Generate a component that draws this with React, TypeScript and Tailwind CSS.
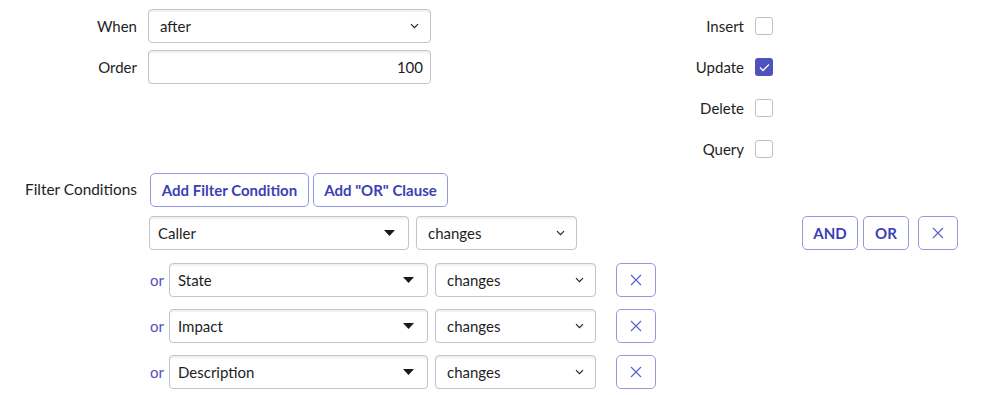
import React from "react";

const font = { fontFamily: "Lato, 'Open Sans', sans-serif" };

function Chevron() {
  return (
    <svg width="9" height="6" viewBox="0 0 9 6" className="shrink-0">
      <path d="M1 1.2l3.5 3.5 3.5-3.5" fill="none" stroke="#222" strokeWidth="1.2" />
    </svg>
  );
}

function Caret() {
  return (
    <svg width="11" height="6" viewBox="0 0 11 6" className="shrink-0">
      <path d="M0 0h11L5.5 6z" fill="#1a1a1a" />
    </svg>
  );
}

function XIcon() {
  return (
    <svg width="12" height="12" viewBox="0 0 12 12">
      <path d="M1 1l10 10M11 1L1 11" stroke="#5a5fc8" strokeWidth="1.1" fill="none" />
    </svg>
  );
}

function NativeSelect({ value, w }: { value: string; w: string }) {
  return (
    <div
      className={`${w} h-[34px] flex items-center justify-between pl-[11px] pr-[11px] border border-[#c3c3cb] rounded-[4px] shadow-[inset_0_2px_1px_rgba(0,0,0,0.06)] text-[15px] text-[#1e1e1e] bg-white`}
    >
      <span>{value}</span>
      <Chevron />
    </div>
  );
}

function RefSelect({ value, w }: { value: string; w: string }) {
  return (
    <div
      className={`${w} h-[34px] flex items-center justify-between pl-[8px] pr-[13px] border border-[#c3c3cb] rounded-[4px] shadow-[inset_0_2px_1px_rgba(0,0,0,0.06)] text-[15px] text-[#1e1e1e] bg-white`}
    >
      <span>{value}</span>
      <Caret />
    </div>
  );
}

function Btn({ children, w }: { children: React.ReactNode; w: string }) {
  return (
    <div
      className={`${w} h-[34px] flex items-center justify-center border border-[#9597de] rounded-[5px] text-[15px] font-bold text-[#3b40b5] bg-white`}
    >
      {children}
    </div>
  );
}

function XBtn() {
  return (
    <div className="w-[40px] h-[34px] flex items-center justify-center border border-[#9597de] rounded-[5px] bg-white">
      <XIcon />
    </div>
  );
}

function Check({ label, checked }: { label: string; checked?: boolean }) {
  return (
    <div className="h-[34px] flex items-center justify-end gap-[11px] text-[15px] text-[#1e1e1e]">
      <span>{label}</span>
      {checked ? (
        <div className="w-[18px] h-[18px] rounded-[3px] bg-[#4f52bd] flex items-center justify-center">
          <svg width="11" height="9" viewBox="0 0 11 9">
            <path d="M1 4.5l3 3 6-6" stroke="#fff" strokeWidth="1.3" fill="none" />
          </svg>
        </div>
      ) : (
        <div className="w-[18px] h-[18px] rounded-[3px] border border-[#bfbfc8] bg-white" />
      )}
    </div>
  );
}

function OrRow({ field }: { field: string }) {
  return (
    <div className="flex items-center h-[34px]">
      <span className="w-[21px] pl-[2px] text-[15px] text-[#4f52bd]">or</span>
      <RefSelect value={field} w="w-[259px]" />
      <div className="w-[7px]" />
      <NativeSelect value="changes" w="w-[161px]" />
      <div className="w-[20px]" />
      <XBtn />
    </div>
  );
}

export default function App() {
  return (
    <div className="w-[999px] h-[395px] bg-white pt-[9px] overflow-hidden" style={font}>
      <div className="flex">
        <div className="w-[448px] grid grid-cols-[137px_auto] gap-x-[11px] gap-y-[7px] grid-rows-[34px_34px_34px_34px_34px]">
          <div className="flex items-center justify-end text-[15px] text-[#1e1e1e]">When</div>
          <div>
            <NativeSelect value="after" w="w-[283px]" />
          </div>
          <div className="flex items-center justify-end text-[15px] text-[#1e1e1e]">Order</div>
          <div className="w-[283px] h-[34px] flex items-center justify-end pr-[7px] border border-[#c3c3cb] rounded-[4px] shadow-[inset_0_2px_1px_rgba(0,0,0,0.06)] text-[15px] text-[#1e1e1e]">
            100
          </div>
          <div />
          <div />
          <div />
          <div />
          <div className="flex items-center justify-end text-[15.4px] text-[#1e1e1e] whitespace-nowrap">
            Filter Conditions
          </div>
          <div className="flex gap-[4px] pl-[2px]">
            <Btn w="w-[159px]">Add Filter Condition</Btn>
            <Btn w="w-[135px]">Add "OR" Clause</Btn>
          </div>
        </div>
        <div className="w-[325px] flex flex-col gap-[7px]">
          <Check label="Insert" />
          <Check label="Update" checked />
          <Check label="Delete" />
          <Check label="Query" />
        </div>
      </div>
      <div className="pl-[149px] mt-[9px] w-[958px]">
        <div className="flex items-center h-[34px]">
          <RefSelect value="Caller" w="w-[260px]" />
          <div className="w-[7px]" />
          <NativeSelect value="changes" w="w-[161px]" />
          <div className="flex-1" />
          <Btn w="w-[56px]">AND</Btn>
          <div className="w-[5px]" />
          <Btn w="w-[46px]">OR</Btn>
          <div className="w-[9px]" />
          <XBtn />
        </div>
        <div className="mt-[13px] flex flex-col gap-[12px] -ml-[1px]">
          <OrRow field="State" />
          <OrRow field="Impact" />
          <OrRow field="Description" />
        </div>
      </div>
    </div>
  );
}
